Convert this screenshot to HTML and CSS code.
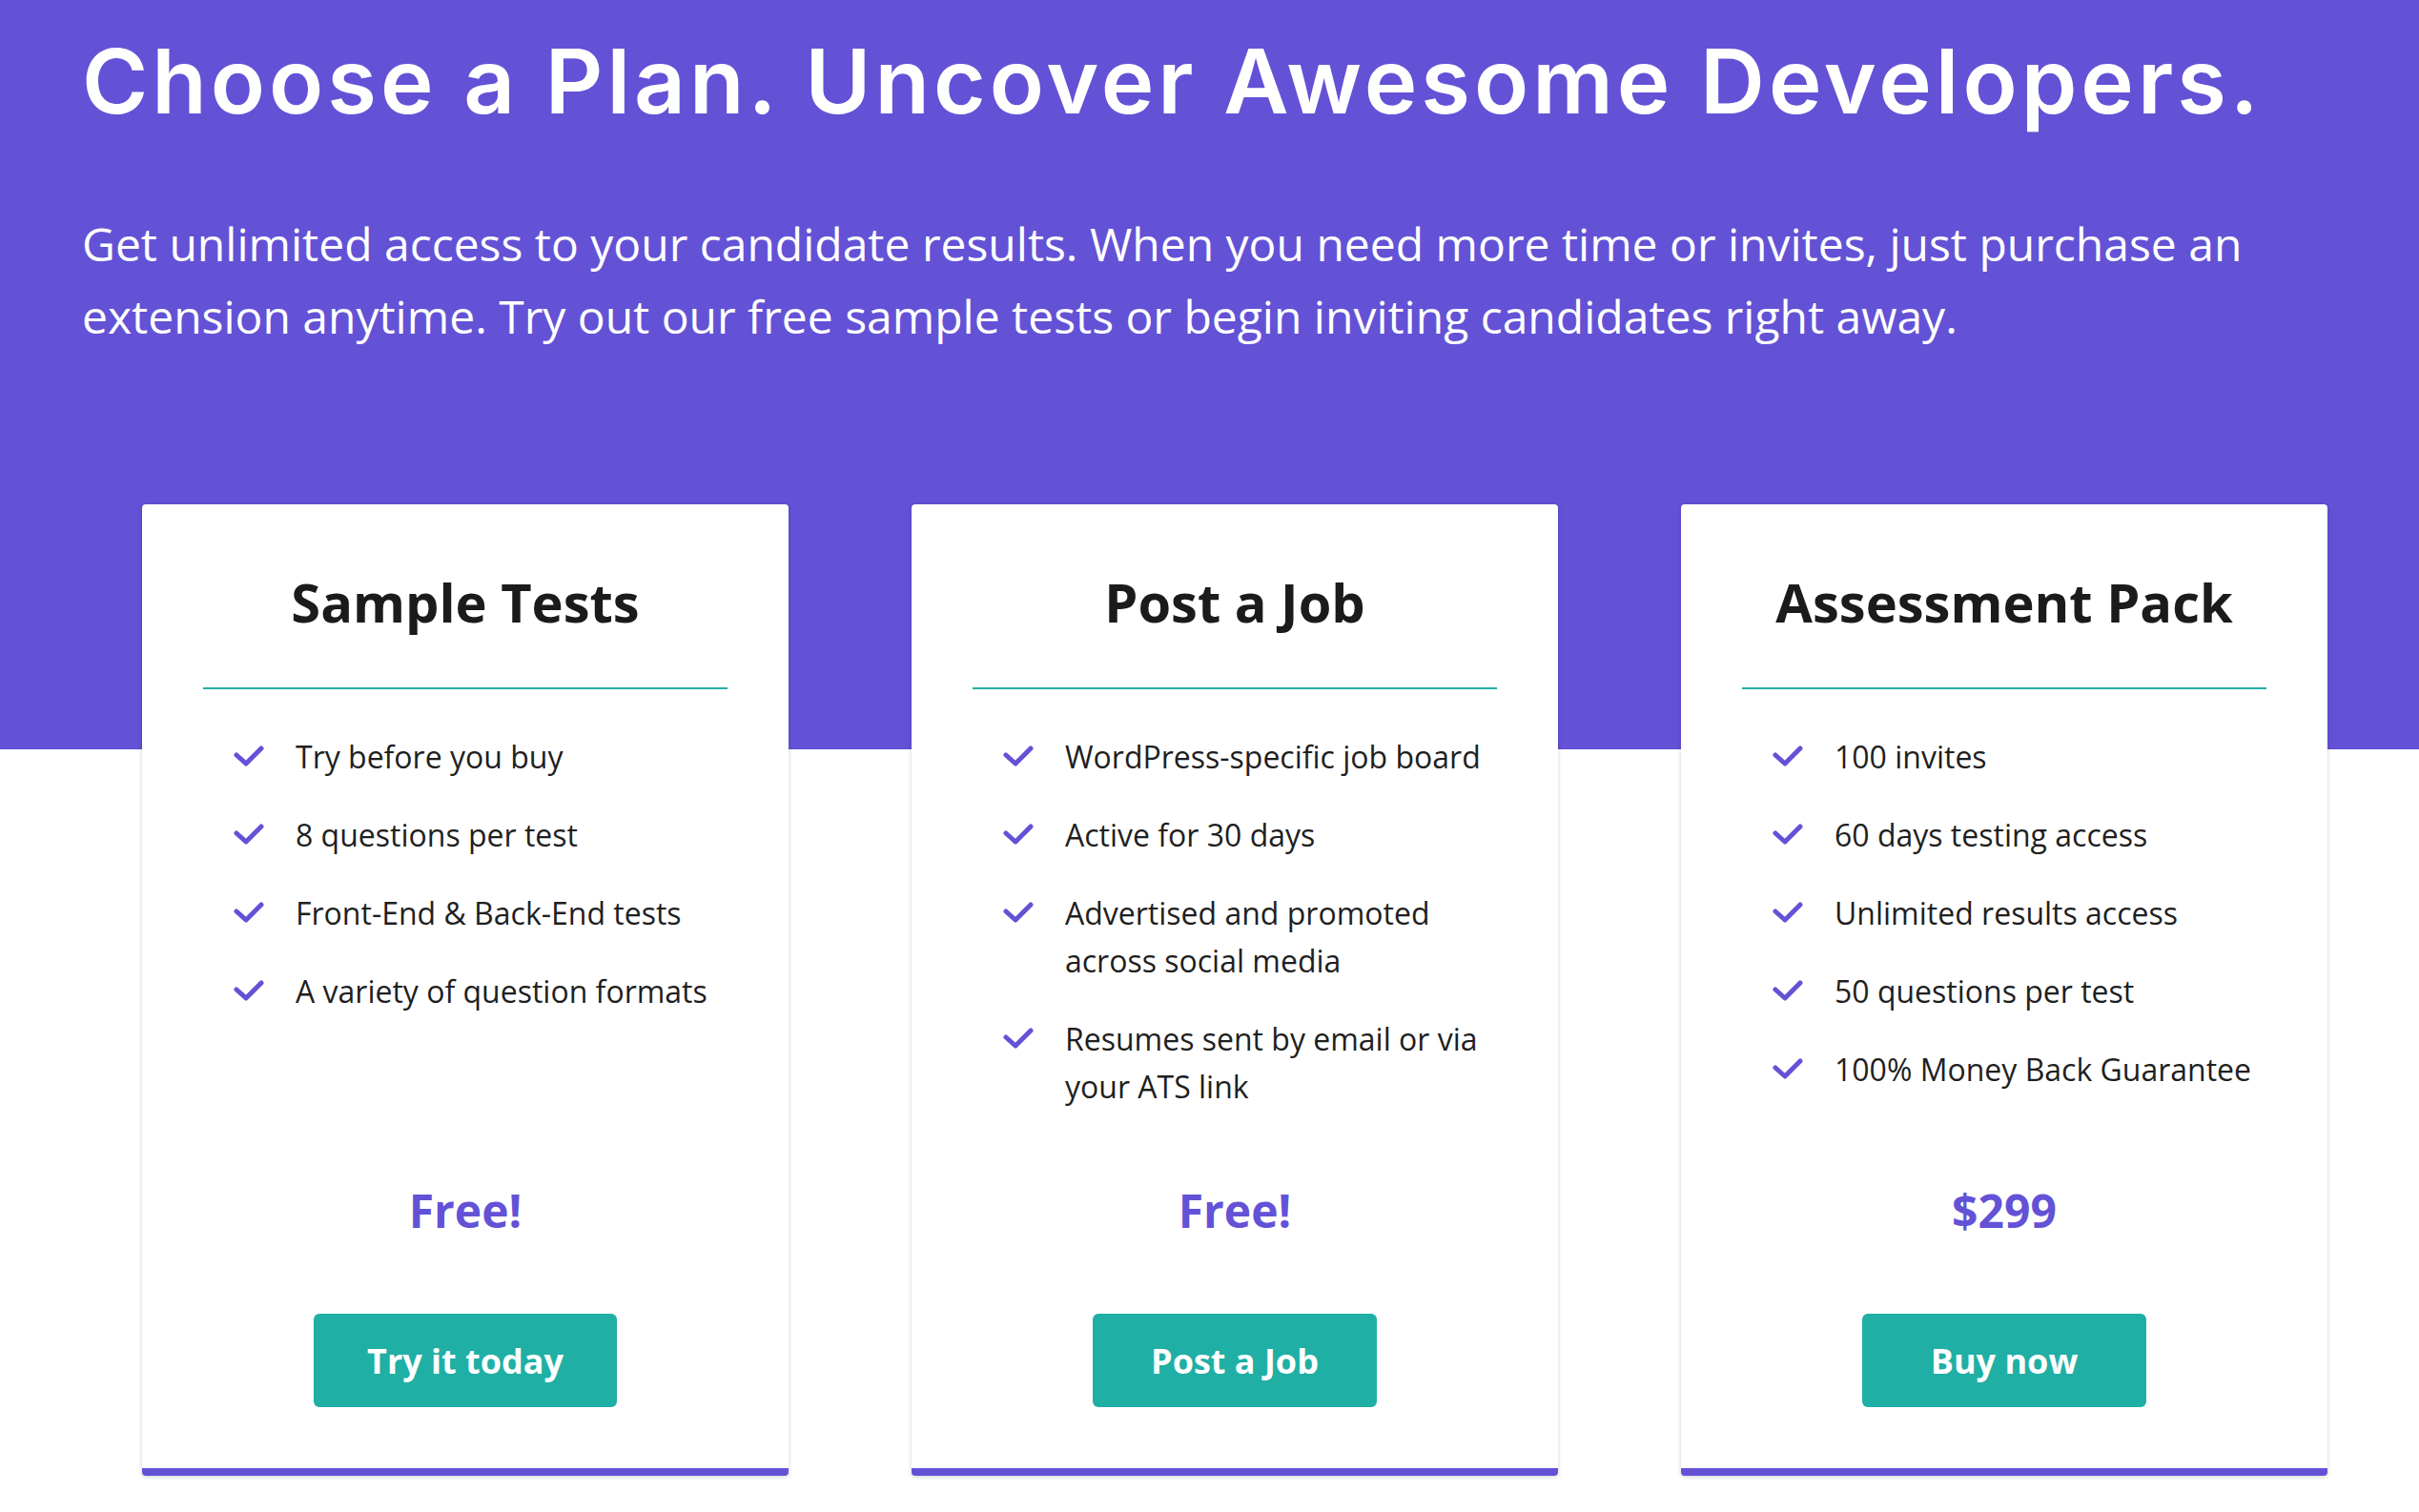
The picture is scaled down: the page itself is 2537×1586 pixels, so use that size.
FILE: index.html
```html
<!DOCTYPE html>
<html lang="en">
<head>
<meta charset="utf-8">
<title>Choose a Plan</title>
<link rel="stylesheet" href="styles.css">
</head>
<body>
<main class="pricing">
  <header class="intro">
    <h1 class="intro-title">Choose a Plan. Uncover Awesome Developers.</h1>
    <p class="intro-text">Get unlimited access to your candidate results. When you need more time or invites, just purchase an extension anytime. Try out our free sample tests or begin inviting candidates right away.</p>
  </header>
  <section class="plans">
    <article class="plan">
      <h2 class="plan-title">Sample Tests</h2>
      <hr class="plan-rule">
      <ul class="plan-features">
        <li class="feature"><svg class="check" viewBox="0 0 32 24"><polyline points="3,10 13,19 29,3"/></svg><span>Try before you buy</span></li>
        <li class="feature"><svg class="check" viewBox="0 0 32 24"><polyline points="3,10 13,19 29,3"/></svg><span>8 questions per test</span></li>
        <li class="feature"><svg class="check" viewBox="0 0 32 24"><polyline points="3,10 13,19 29,3"/></svg><span>Front-End &amp; Back-End tests</span></li>
        <li class="feature"><svg class="check" viewBox="0 0 32 24"><polyline points="3,10 13,19 29,3"/></svg><span>A variety of question formats</span></li>
      </ul>
      <div class="plan-price">Free!</div>
      <a class="plan-button" href="#">Try it today</a>
    </article>
    <article class="plan">
      <h2 class="plan-title">Post a Job</h2>
      <hr class="plan-rule">
      <ul class="plan-features">
        <li class="feature"><svg class="check" viewBox="0 0 32 24"><polyline points="3,10 13,19 29,3"/></svg><span>WordPress-specific job board</span></li>
        <li class="feature"><svg class="check" viewBox="0 0 32 24"><polyline points="3,10 13,19 29,3"/></svg><span>Active for 30 days</span></li>
        <li class="feature"><svg class="check" viewBox="0 0 32 24"><polyline points="3,10 13,19 29,3"/></svg><span>Advertised and promoted across social media</span></li>
        <li class="feature"><svg class="check" viewBox="0 0 32 24"><polyline points="3,10 13,19 29,3"/></svg><span>Resumes sent by email or via your ATS link</span></li>
      </ul>
      <div class="plan-price">Free!</div>
      <a class="plan-button" href="#">Post a Job</a>
    </article>
    <article class="plan">
      <h2 class="plan-title">Assessment Pack</h2>
      <hr class="plan-rule">
      <ul class="plan-features">
        <li class="feature"><svg class="check" viewBox="0 0 32 24"><polyline points="3,10 13,19 29,3"/></svg><span>100 invites</span></li>
        <li class="feature"><svg class="check" viewBox="0 0 32 24"><polyline points="3,10 13,19 29,3"/></svg><span>60 days testing access</span></li>
        <li class="feature"><svg class="check" viewBox="0 0 32 24"><polyline points="3,10 13,19 29,3"/></svg><span>Unlimited results access</span></li>
        <li class="feature"><svg class="check" viewBox="0 0 32 24"><polyline points="3,10 13,19 29,3"/></svg><span>50 questions per test</span></li>
        <li class="feature"><svg class="check" viewBox="0 0 32 24"><polyline points="3,10 13,19 29,3"/></svg><span>100% Money Back Guarantee</span></li>
      </ul>
      <div class="plan-price">$299</div>
      <a class="plan-button" href="#">Buy now</a>
    </article>
  </section>
</main>
</body>
</html>
```

FILE: styles.css
```css
* { box-sizing: border-box; }

html, body {
  margin: 0;
  padding: 0;
  background: #ffffff;
}

body {
  font-family: "Open Sans", "Liberation Sans", sans-serif;
  color: #1d1d1d;
}

.pricing {
  background: linear-gradient(to bottom, #6352d6 0, #6352d6 786px, #ffffff 786px);
  min-height: 1586px;
  padding-top: 29px;
}

.intro {
  padding: 0 86px;
}

.intro-title {
  margin: 0;
  font-family: Inter, "Open Sans", sans-serif;
  font-weight: 600;
  font-size: 94px;
  line-height: 1.2;
  letter-spacing: 4px;
  color: #ffffff;
  white-space: nowrap;
}

.intro-text {
  margin: 76px 0 0;
  max-width: 2330px;
  font-size: 48px;
  line-height: 76px;
  font-weight: 400;
  color: #ffffff;
}

.plans {
  display: grid;
  grid-template-columns: repeat(3, 678px);
  column-gap: 129px;
  padding-left: 149px;
  margin-top: 159px;
}

.plan {
  display: flex;
  flex-direction: column;
  align-items: stretch;
  background: #ffffff;
  border-radius: 4px;
  border-bottom: 8px solid #6352d6;
  box-shadow: 0 1px 5px rgba(0, 0, 0, 0.18);
  padding: 64px 64px 64px;
}

.plan-title {
  margin: 0;
  text-align: center;
  font-size: 56px;
  font-weight: 700;
  line-height: normal;
  color: #1b1b1b;
}

.plan-rule {
  margin: 52px 0 0;
  border: 0;
  height: 2px;
  background: #20afa5;
}

.plan-features {
  list-style: none;
  margin: 46px 0 0;
  padding: 0 0 0 32px;
  display: flex;
  flex-direction: column;
  gap: 32px;
}

.feature {
  display: flex;
  align-items: flex-start;
  gap: 33px;
  font-size: 32px;
  line-height: 50px;
  color: #1f1f1f;
}

.check {
  flex: 0 0 32px;
  width: 32px;
  height: 24px;
  margin-top: 13px;
  fill: none;
  stroke: #6352d6;
  stroke-width: 5;
  stroke-linecap: round;
  stroke-linejoin: round;
}

.plan-price {
  margin-top: auto;
  padding-top: 72px;
  margin-bottom: 76px;
  text-align: center;
  font-size: 48px;
  font-weight: 700;
  line-height: normal;
  color: #6352d6;
}

.plan-button {
  align-self: center;
  min-width: 298px;
  height: 98px;
  padding: 2px 56px 0;
  display: flex;
  align-items: center;
  justify-content: center;
  background: #20afa5;
  border-radius: 6px;
  color: #ffffff;
  font-size: 36px;
  font-weight: 700;
  text-decoration: none;
}
```
